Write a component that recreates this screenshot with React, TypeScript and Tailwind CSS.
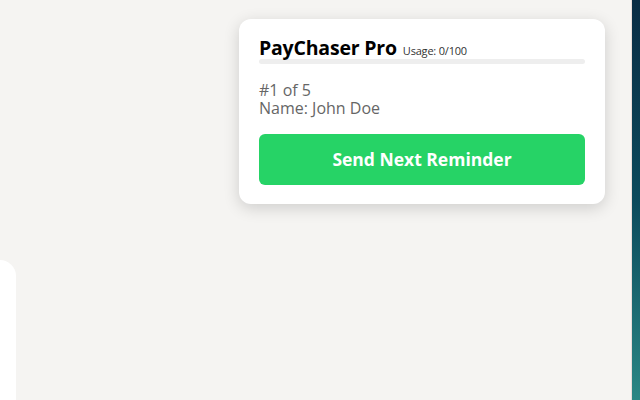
export default function App() {
  const used = 0;
  const limit = 100;

  return (
    <div
      className="relative flex h-[400px] w-[640px] overflow-hidden bg-[#f5f4f2]"
      style={{ fontFamily: '"Open Sans", "Noto Sans", sans-serif' }}
    >
      <div className="flex flex-1 flex-col justify-end">
        <div className="h-[140px] w-[16px] rounded-tr-[16px] bg-white" />
      </div>
      <div className="w-px bg-[#e9dcd8]" />
      <div className="w-[8px] bg-gradient-to-b from-[#0a2c44] via-[#0c4a5c] to-[#2b8784]" />

      <div className="absolute top-[19px] right-[35px] w-[366px] rounded-xl bg-white px-5 pt-[17px] pb-[19px] shadow-[0_4px_16px_rgba(0,0,0,0.16)]">
        <div className="flex items-baseline gap-[6px]">
          <h1 className="text-[19.5px] leading-[24px] font-bold tracking-[-0.2px] text-black">PayChaser Pro</h1>
          <span className="text-[11px] tracking-[-0.2px] text-[#333]">
            Usage: {used}/{limit}
          </span>
        </div>
        <div className="mt-[-1px] h-[5px] w-full rounded-full bg-[#eeeeee]">
          <div className="h-full rounded-full bg-[#25d366]" style={{ width: `${(used / limit) * 100}%` }} />
        </div>

        <div className="mt-[17px] text-[16px] leading-[18px] text-[#666]">
          <p>#1 of 5</p>
          <p>Name: John Doe</p>
        </div>

        <button
          type="button"
          className="mt-[17px] h-[51px] w-full rounded-md bg-[#26d366] text-[17.5px] font-bold text-white"
        >
          Send Next Reminder
        </button>
      </div>
    </div>
  );
}
